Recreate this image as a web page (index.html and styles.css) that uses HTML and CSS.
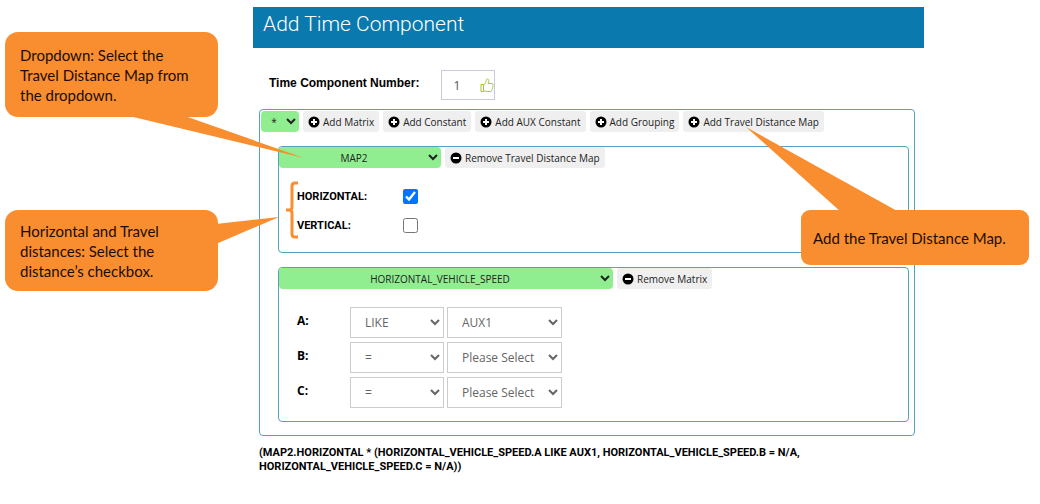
FILE: index.html
```html
<!DOCTYPE html>
<html lang="en">

<head>
    <meta charset="UTF-8">
    <meta name="viewport" content="width=device-width, initial-scale=1.0">
    <link rel="stylesheet" href="styles.css">
    <title>Add Time Component</title>
</head>

<body>
    <!-- shared button icons -->
    <svg class="symbols" aria-hidden="true">
        <symbol id="plus" viewBox="0 0 12 12">
            <circle cx="6" cy="6" r="5.5" />
            <path d="M6 3v6M3 6h6" stroke="#fff" stroke-width="2" />
        </symbol>
        <symbol id="minus" viewBox="0 0 12 12">
            <circle cx="6" cy="6" r="5.5" />
            <path d="M3 6h6" stroke="#fff" stroke-width="2" />
        </symbol>
    </svg>

    <main class="page">
        <h1 class="title">Add Time Component</h1>

        <div class="number-row">
            <label for="number">Time Component Number:</label>
            <div class="number-field">
                <input type="text" id="number" class="number-input" value="1">
                <svg class="thumb" viewBox="0 0 14 15" aria-hidden="true">
                    <path d="M1 6.500h2.500v7H1zM3.500 7.500C4.800 6 5.800 4.800 6 3.500C6.100 1.900 6.500 1 7.300 1C8.600 1 9 2.200 8.700 3.500L8.200 5.500H11.800C13.200 5.500 13.500 7 12.600 7.700C13.300 8.400 13.100 9.500 12.300 9.900C12.700 10.700 12.400 11.500 11.700 11.900C11.900 13 11.200 13.500 10.200 13.500H7.500C5.800 13.500 5 13 3.500 12.800" />
                </svg>
            </div>
        </div>

        <section class="box">
            <div class="toolbar">
                <select class="green operator" aria-label="Operator">
                    <option>*</option>
                </select>
                <button type="button" class="btn"><svg class="icon"><use href="#plus" /></svg>Add Matrix</button>
                <button type="button" class="btn"><svg class="icon"><use href="#plus" /></svg>Add Constant</button>
                <button type="button" class="btn"><svg class="icon"><use href="#plus" /></svg>Add AUX Constant</button>
                <button type="button" class="btn"><svg class="icon"><use href="#plus" /></svg>Add Grouping</button>
                <button type="button" class="btn"><svg class="icon"><use href="#plus" /></svg>Add Travel Distance Map</button>
            </div>

            <section class="box inner">
                <div class="toolbar">
                    <select class="green map" aria-label="Travel distance map">
                        <option>MAP2</option>
                    </select>
                    <button type="button" class="btn"><svg class="icon"><use href="#minus" /></svg>Remove Travel Distance Map</button>
                </div>
                <div class="checks">
                    <label for="horizontal">HORIZONTAL:</label>
                    <input type="checkbox" id="horizontal" checked>
                    <label for="vertical">VERTICAL:</label>
                    <input type="checkbox" id="vertical">
                </div>
            </section>

            <section class="box inner">
                <div class="toolbar">
                    <select class="green matrix" aria-label="Matrix">
                        <option>HORIZONTAL_VEHICLE_SPEED</option>
                    </select>
                    <button type="button" class="btn"><svg class="icon"><use href="#minus" /></svg>Remove Matrix</button>
                </div>
                <div class="params">
                    <label for="a-op">A:</label>
                    <select id="a-op"><option>LIKE</option></select>
                    <select aria-label="A value"><option>AUX1</option></select>
                    <label for="b-op">B:</label>
                    <select id="b-op"><option>=</option></select>
                    <select aria-label="B value"><option>Please Select</option></select>
                    <label for="c-op">C:</label>
                    <select id="c-op"><option>=</option></select>
                    <select aria-label="C value"><option>Please Select</option></select>
                </div>
            </section>
        </section>

        <p class="formula">(MAP2.HORIZONTAL * (HORIZONTAL_VEHICLE_SPEED.A LIKE AUX1, HORIZONTAL_VEHICLE_SPEED.B = N/A, HORIZONTAL_VEHICLE_SPEED.C = N/A))</p>

        <!-- annotations over the form -->
        <aside class="callout callout-dropdown">
            <svg class="tail" viewBox="0 0 213 85" aria-hidden="true"><path d="M120 83L299 126L177 83z" /></svg>
            Dropdown: Select the Travel Distance Map from the dropdown.
        </aside>
        <aside class="callout callout-distances">
            <svg class="tail" viewBox="0 0 213 81" aria-hidden="true"><path d="M211 14L274 7L211 34z" /></svg>
            Horizontal and Travel distances: Select the distance’s checkbox.
        </aside>
        <aside class="callout callout-map">
            <svg class="tail" viewBox="0 0 228 55" aria-hidden="true"><path d="M40 2L-55 -83L98 2z" /></svg>
            Add the Travel Distance Map.
        </aside>
        <svg class="brace" viewBox="0 0 14 58" aria-hidden="true">
            <path d="M13 2H10Q7 2 7 5V26Q7 29 4 29H1H4Q7 29 7 32V53Q7 56 10 56H13" />
        </svg>
    </main>
</body>

</html>
```
FILE: styles.css
```css
* {
  box-sizing: border-box;
}

body {
  margin: 0;
  background: #fff;
  color: #000;
  font-family: "Open Sans", sans-serif;
  font-size: 10px;
}

button,
input,
select {
  font-family: inherit;
  font-size: inherit;
}

.symbols {
  position: absolute;
  width: 0;
  height: 0;
}

.page {
  position: relative;
  padding: 7px 116px 24px 253px;
}

.title {
  margin: 0;
  padding: 0 10px 7px;
  background: #0a79ad;
  color: #fff;
  font: 300 21px/34px Roboto, sans-serif;
}

.number-row {
  display: flex;
  gap: 22px;
  padding: 22px 16px 9px;
  font-family: "Liberation Sans", sans-serif;
  font-weight: bold;
  font-size: 12px;
  line-height: 26px;
}

.number-field {
  position: relative;
}

.number-input {
  display: block;
  width: 54px;
  height: 30px;
  padding: 0 11px;
  border: 1px solid #c8cbdc;
  color: #555;
  font-family: "Open Sans", sans-serif;
  font-size: 12px;
}

.thumb {
  position: absolute;
  top: 8px;
  right: 1px;
  width: 14px;
  height: 15px;
  fill: none;
  stroke: #a4c639;
}

.box {
  margin: 0 9px 0 6px;
  padding-bottom: 13px;
  border: 1px solid #55a2bf;
  border-radius: 4px;
}

.box > .toolbar {
  padding: 1px 1px 0;
}

.toolbar {
  display: flex;
  gap: 4px;
}

.inner {
  margin: 14px 5px 0 18px;
  padding-bottom: 0;
}

.inner > .toolbar {
  padding: 0;
}

.green {
  height: 21px;
  padding: 0;
  border: 0;
  border-radius: 4px;
  background: #90ee90;
  color: #222;
  text-align-last: center;
}

.operator {
  width: 38px;
}

.map {
  width: 162px;
}

.matrix {
  width: 334px;
}

.btn {
  display: flex;
  align-items: center;
  gap: 3px;
  height: 21px;
  padding: 0 5px;
  border: 0;
  border-radius: 3px;
  background: #efefef;
  color: #222;
  white-space: nowrap;
}

.icon {
  width: 12px;
  height: 12px;
}

.checks,
.params {
  display: grid;
  justify-content: start;
  font-weight: bold;
}

.checks {
  grid-template-columns: 106px 15px;
  row-gap: 14px;
  align-items: center;
  padding: 21px 18px 19px;
  font-family: Roboto, sans-serif;
  font-size: 11px;
  line-height: 15px;
}

.checks input {
  width: 15px;
  height: 15px;
  margin: 0;
  accent-color: #0075ff;
}

.params {
  grid-template-columns: 50px 94px 115px;
  gap: 4px 3px;
  padding: 18px 18px 13px;
  font-size: 12px;
  line-height: 28px;
}

.params select {
  height: 31px;
  padding: 0 0 0 10px;
  border: 1px solid #ccc;
  border-radius: 0;
  background: #fff;
  color: #666;
}

.formula {
  margin: 10px 9px 0 6px;
  font: bold 11px/14px Roboto, sans-serif;
}

.callout {
  position: absolute;
  display: flex;
  align-items: center;
  border-radius: 13px;
  background: #f98e30;
  color: #1c0c00;
  font: 15px/20px Lato, sans-serif;
}

.callout-dropdown {
  top: 32px;
  left: 5px;
  width: 213px;
  height: 85px;
  padding: 0 15px;
}

.callout-distances {
  top: 210px;
  left: 5px;
  width: 213px;
  height: 81px;
  padding: 0 15px;
}

.callout-map {
  top: 210px;
  right: 11px;
  width: 228px;
  height: 55px;
  padding: 0 12px;
  border-radius: 9px;
}

.tail {
  position: absolute;
  top: 0;
  left: 0;
  width: 100%;
  height: 100%;
  overflow: visible;
  fill: #f98e30;
}

.brace {
  position: absolute;
  top: 181px;
  left: 285px;
  width: 14px;
  height: 58px;
  fill: none;
  stroke: #f98e30;
  stroke-width: 3;
}
```
